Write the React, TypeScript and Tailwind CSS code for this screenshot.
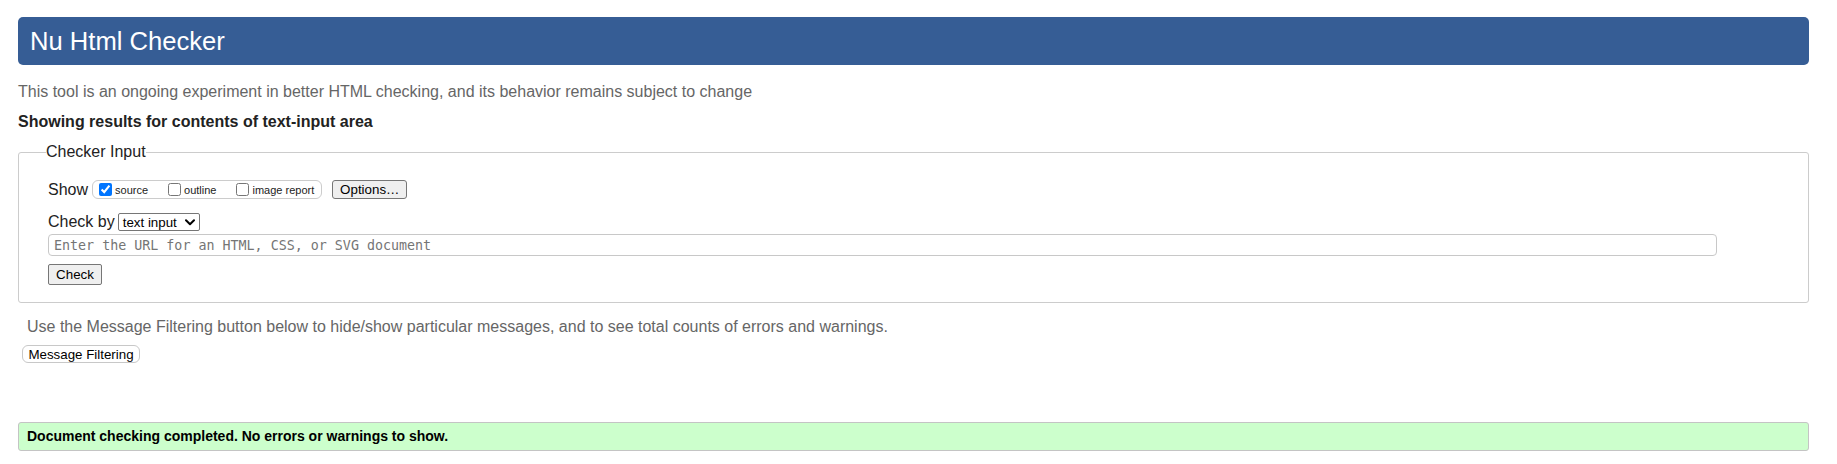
import React from "react";

function Chevron() {
  return (
    <svg width="10" height="7" viewBox="0 0 10 7" className="ml-auto">
      <path d="M1 1.2 L5 5.2 L9 1.2" fill="none" stroke="#000" strokeWidth="2" strokeLinecap="round" strokeLinejoin="round" />
    </svg>
  );
}

export default function App() {
  return (
    <div className="min-h-[464px] bg-white pl-[18px] pr-[28px] pt-[17px] font-[Liberation_Sans,Arial,sans-serif] text-[#222]">
      <div className="h-[48px] rounded-[5px] bg-[#365d95] flex items-center pl-[12px]">
        <h1 className="text-[25.6px] leading-[28px] text-white font-normal">Nu Html Checker</h1>
      </div>

      <p className="mt-[18px] text-[16px] leading-[18px] text-[#666]">
        This tool is an ongoing experiment in better HTML checking, and its behavior remains subject to change
      </p>

      <p className="mt-[12px] text-[16px] leading-[18px] font-bold text-[#222]">
        Showing results for contents of text-input area
      </p>

      <fieldset className="mt-[12px] border border-[#cccccc] rounded-[3px] pl-[27px] pt-[19px] pb-[17px]">
        <legend className="text-[16px] leading-[18px] text-[#222]">Checker Input</legend>
        <div className="pl-[2px]">
          <div className="flex items-center h-[19px]">
            <span className="text-[16px] leading-[18px]">Show</span>
            <div className="ml-[4px] flex items-center h-[19px] border border-[#cccccc] rounded-[6px] pl-[6px] pr-[7px]">
              <label className="flex items-center">
                <input type="checkbox" defaultChecked className="w-[13px] h-[13px] m-0 accent-[#0075ff]" />
                <span className="ml-[3px] mt-[2px] text-[11px] leading-[13px]">source</span>
              </label>
              <label className="flex items-center ml-[20px]">
                <input type="checkbox" className="w-[13px] h-[13px] m-0" />
                <span className="ml-[3px] mt-[2px] text-[11px] leading-[13px]">outline</span>
              </label>
              <label className="flex items-center ml-[20px]">
                <input type="checkbox" className="w-[13px] h-[13px] m-0" />
                <span className="ml-[3px] mt-[2px] text-[11px] leading-[13px]">image report</span>
              </label>
            </div>
            <button className="ml-[10px] h-[19px] w-[75px] flex items-center justify-center bg-[#efefef] border border-[#767676] rounded-[3px] text-[13.33px] leading-[15px] text-black">
              Options…
            </button>
          </div>

          <div className="mt-[14px] flex items-center h-[18px]">
            <span className="text-[16px] leading-[18px]">Check by</span>
            <div className="ml-[3px] h-[18px] w-[82px] flex items-center border border-[#767676] rounded-[2px] pl-[4px] pr-[4px] text-[13.33px] leading-[15px] text-black bg-white">
              <span>text input</span>
              <Chevron />
            </div>
          </div>

          <input
            type="text"
            placeholder="Enter the URL for an HTML, CSS, or SVG document"
            className="block mt-[3px] h-[22px] w-[1669px] border border-[#c8c8c8] rounded-[4px] px-[5px] font-['DejaVu_Sans_Mono',monospace] text-[13.33px] placeholder:text-[#757575] outline-none"
          />

          <button className="mt-[8px] h-[21px] w-[54px] flex items-center justify-center bg-[#efefef] border border-[#767676] rounded-[2px] text-[13.33px] leading-[15px] text-black">
            Check
          </button>
        </div>
      </fieldset>

      <p className="mt-[15px] pl-[9px] text-[16px] leading-[18px] text-[#666]">
        Use the Message Filtering button below to hide/show particular messages, and to see total counts of errors and warnings.
      </p>

      <button className="mt-[9px] ml-[4px] h-[18px] w-[118px] flex items-center justify-center bg-white border border-[#c8c8c8] rounded-[6px] text-[13.33px] leading-[15px] text-black">
        Message Filtering
      </button>

      <div className="mt-[59px] h-[29px] flex items-center bg-[#ccffcc] border border-[#c4c4c4] rounded-[3px] pl-[8px] text-[14px] font-bold text-black">
        Document checking completed. No errors or warnings to show.
      </div>
    </div>
  );
}
